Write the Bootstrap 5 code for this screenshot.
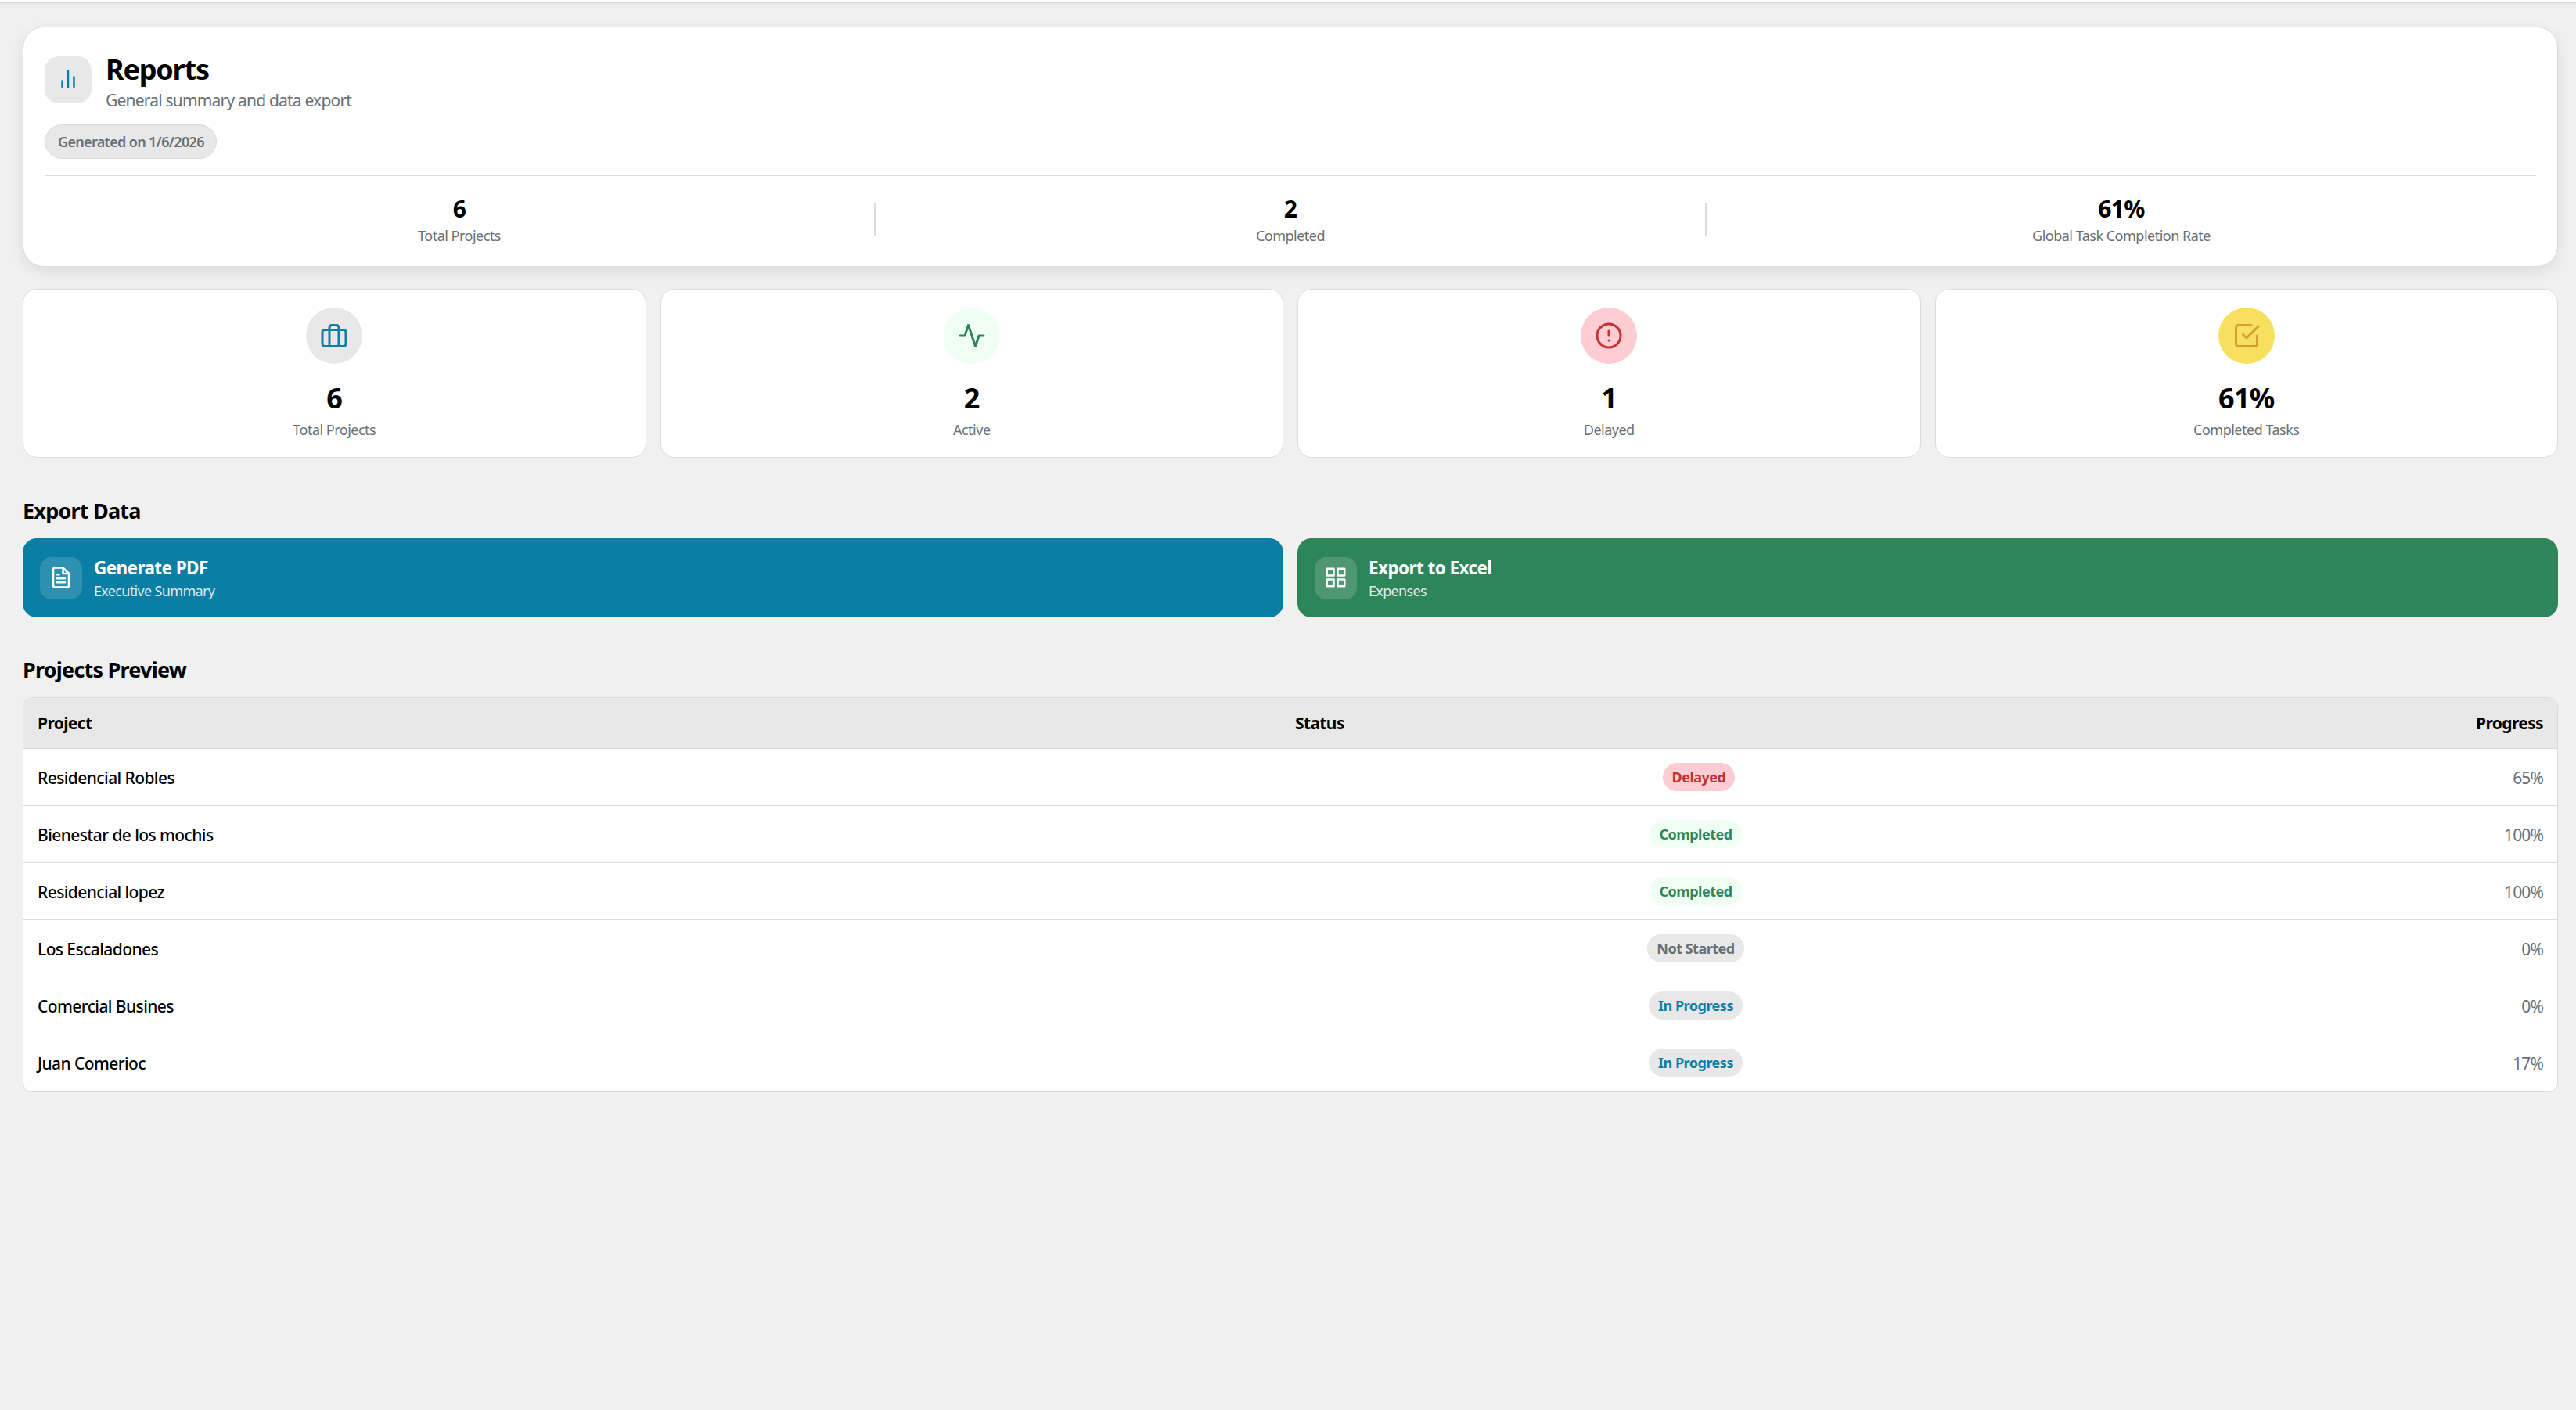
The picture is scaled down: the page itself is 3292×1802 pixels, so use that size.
<!DOCTYPE html>
<html lang="en">
<head>
  <meta charset="UTF-8" />
  <meta name="viewport" content="width=device-width, initial-scale=1" />
  <title>Reports</title>
  <link href="https://cdn.jsdelivr.net/npm/bootstrap@5.3.3/dist/css/bootstrap.min.css" rel="stylesheet" />
  <style>
    :root {
      --line: #dcdcdc;
      --soft: #e8e8e8;
      --muted: #687076;
      --blue: #0a7ea4;
      --green: #2f855a;
      --red: #c53030;
      --gold: #d69e2e;
    }

    body {
      background-color: #f0f0f0;
      font-family: 'Noto Sans', 'Open Sans', sans-serif;
      font-size: 21px;
      color: #000;
      min-height: 100vh;
    }

    svg {
      display: block;
      fill: none;
      stroke: currentColor;
      stroke-width: 2;
      stroke-linecap: round;
      stroke-linejoin: round;
    }

    .topbar {
      height: 4px;
      background-color: #fff;
      border-bottom: 1px solid #d6d6d6;
      box-shadow: 0 2px 6px rgba(0, 0, 0, 0.07);
    }

    main {
      padding: 30px 23px 0 29px;
    }

    h1 {
      font-size: 36px;
      line-height: 46px;
      letter-spacing: -0.033em;
      padding-top: 2px;
    }

    h2 {
      font-size: 27px;
      line-height: 34px;
      letter-spacing: -0.029em;
      margin: 0 0 18px;
    }

    .text-soft {
      color: var(--muted);
    }

    /* Header card */
    .report-head {
      background-color: #fff;
      border: 1px solid var(--line);
      border-radius: 27px;
      padding: 29px 27px 27px;
      box-shadow: 0 6px 18px rgba(0, 0, 0, 0.08);
    }

    .head-icon {
      width: 60px;
      height: 60px;
      border-radius: 18px;
      background-color: var(--soft);
      color: var(--blue);
      margin-right: 18px;
      padding-top: 14px;
    }

    .subtitle {
      line-height: 24px;
      letter-spacing: -0.038em;
      margin-top: 4px;
    }

    .date-pill {
      display: inline-block;
      margin-top: 19px;
      padding: 0 15px 0 16px;
      height: 44px;
      line-height: 42px;
      font-size: 18px;
      font-weight: 600;
      letter-spacing: -0.037em;
      border: 1px solid var(--line);
      border-radius: 22px;
      background-color: var(--soft);
    }

    .head-stats {
      margin-top: 21px;
      padding-top: 23px;
      border-top: 1px solid var(--line);
    }

    .head-stats .vr {
      width: 2px;
      height: 42px;
      margin-bottom: 2px;
      background-color: var(--line);
      opacity: 1;
    }

    .head-value {
      font-size: 30px;
      line-height: 36px;
      letter-spacing: -0.02em;
      padding-top: 1px;
      margin-bottom: 4px;
    }

    .caption-text {
      font-size: 18px;
      line-height: 24px;
      letter-spacing: -0.028em;
    }

    /* Stat cards */
    .stat-grid {
      display: grid;
      grid-template-columns: repeat(4, 1fr);
      gap: 18px;
      margin-top: 28px;
    }

    .stat-box {
      background-color: #fff;
      border: 1px solid var(--line);
      border-radius: 18px;
      padding: 23px 0;
    }

    .stat-icon {
      width: 72px;
      height: 72px;
    }

    .stat-icon svg {
      margin-top: -1px;
    }

    .stat-value {
      font-size: 36px;
      line-height: 44px;
      letter-spacing: -0.02em;
      margin: 22px 0 6px;
    }

    .tone-blue { background-color: var(--soft); color: var(--blue); }
    .tone-green { background-color: #f0fff4; color: var(--green); }
    .tone-red { background-color: #fecdd3; color: var(--red); }
    .tone-gold { background-color: #f6e05e; color: var(--gold); }
    .tone-gray { background-color: var(--soft); color: var(--muted); }

    /* Export buttons */
    .export-title {
      margin-top: 51px;
    }

    .export-grid {
      display: grid;
      grid-template-columns: 1fr 1fr;
      gap: 18px;
    }

    .export-btn {
      height: 101px;
      border: 0;
      border-radius: 18px;
      padding: 0 22px;
      color: #fff;
      text-align: left;
    }

    .export-icon {
      width: 54px;
      height: 54px;
      border-radius: 15px;
      margin-right: 15px;
      background-color: rgba(255, 255, 255, 0.15);
    }

    .export-icon svg {
      margin-top: -2px;
    }

    .export-name {
      font-size: 22.5px;
      line-height: 30px;
      letter-spacing: -0.026em;
      padding-top: 1px;
      margin-bottom: 2px;
    }

    .export-note {
      font-size: 18px;
      line-height: 24px;
      letter-spacing: -0.037em;
      opacity: 0.85;
    }

    .bg-pdf { background-color: var(--blue); }
    .bg-excel { background-color: var(--green); }

    /* Projects table */
    .preview-title {
      margin-top: 50px;
    }

    .preview {
      background-color: #fff;
      border: 1px solid var(--line);
      border-radius: 12px;
      overflow: hidden;
    }

    .preview-row {
      display: grid;
      grid-template-columns: 1607px 1024px 1fr;
      align-items: center;
      height: 73px;
      padding: 0 18px;
      border-bottom: 1px solid var(--line);
    }

    .preview-head {
      height: 65px;
      padding-top: 2px;
      background-color: var(--soft);
      font-weight: 700;
      letter-spacing: -0.03em;
    }

    .project-name {
      font-weight: 500;
      letter-spacing: -0.028em;
      padding-top: 3px;
    }

    .percent {
      letter-spacing: -0.042em;
      padding-top: 3px;
    }

    .status-pill {
      display: inline-block;
      height: 36px;
      line-height: 36px;
      padding: 0 12px;
      border-radius: 18px;
      font-size: 18px;
      font-weight: 700;
      letter-spacing: -0.028em;
    }

    .status-late {
      margin-left: 8px;
    }
  </style>
</head>
<body>

<div class="topbar"></div>

<main>
  <!-- Header -->
  <section class="report-head">
    <div class="d-flex align-items-center">
      <div class="head-icon d-flex justify-content-center">
        <svg width="30" height="30" viewBox="0 0 24 24"><path d="M18 20V10M12 20V4M6 20v-6" /></svg>
      </div>
      <div>
        <h1 class="fw-bold m-0">Reports</h1>
        <div class="subtitle text-soft">General summary and data export</div>
      </div>
    </div>
    <div class="d-flex"><span class="date-pill text-soft">Generated on 1/6/2026</span></div>

    <div class="head-stats d-flex align-items-center text-center">
      <div class="flex-fill w-100">
        <div class="head-value fw-bold">6</div>
        <div class="caption-text text-soft">Total Projects</div>
      </div>
      <div class="vr flex-shrink-0 align-self-center"></div>
      <div class="flex-fill w-100">
        <div class="head-value fw-bold">2</div>
        <div class="caption-text text-soft">Completed</div>
      </div>
      <div class="vr flex-shrink-0 align-self-center"></div>
      <div class="flex-fill w-100">
        <div class="head-value fw-bold">61%</div>
        <div class="caption-text text-soft">Global Task Completion Rate</div>
      </div>
    </div>
  </section>

  <!-- Stats -->
  <section class="stat-grid text-center">
    <div class="stat-box">
      <div class="stat-icon tone-blue rounded-circle mx-auto d-flex align-items-center justify-content-center">
        <svg width="36" height="36" viewBox="0 0 24 24"><rect x="2" y="7" width="20" height="14" rx="2" /><path d="M16 21V5a2 2 0 0 0-2-2h-4a2 2 0 0 0-2 2v16" /></svg>
      </div>
      <div class="stat-value fw-bold">6</div>
      <div class="caption-text text-soft">Total Projects</div>
    </div>
    <div class="stat-box">
      <div class="stat-icon tone-green rounded-circle mx-auto d-flex align-items-center justify-content-center">
        <svg width="36" height="36" viewBox="0 0 24 24"><polyline points="22 12 18 12 15 21 9 3 6 12 2 12" /></svg>
      </div>
      <div class="stat-value fw-bold">2</div>
      <div class="caption-text text-soft">Active</div>
    </div>
    <div class="stat-box">
      <div class="stat-icon tone-red rounded-circle mx-auto d-flex align-items-center justify-content-center">
        <svg width="36" height="36" viewBox="0 0 24 24"><circle cx="12" cy="12" r="10" /><path d="M12 8v4M12 16h.01" /></svg>
      </div>
      <div class="stat-value fw-bold">1</div>
      <div class="caption-text text-soft">Delayed</div>
    </div>
    <div class="stat-box">
      <div class="stat-icon tone-gold rounded-circle mx-auto d-flex align-items-center justify-content-center">
        <svg width="36" height="36" viewBox="0 0 24 24"><polyline points="9 11 12 14 22 4" /><path d="M21 12v7a2 2 0 0 1-2 2H5a2 2 0 0 1-2-2V5a2 2 0 0 1 2-2h11" /></svg>
      </div>
      <div class="stat-value fw-bold">61%</div>
      <div class="caption-text text-soft">Completed Tasks</div>
    </div>
  </section>

  <!-- Export -->
  <h2 class="export-title fw-bold">Export Data</h2>
  <section class="export-grid">
    <button type="button" class="export-btn bg-pdf d-flex align-items-center">
      <span class="export-icon d-flex align-items-center justify-content-center">
        <svg width="30" height="30" viewBox="0 0 24 24"><path d="M14 2H6a2 2 0 0 0-2 2v16a2 2 0 0 0 2 2h12a2 2 0 0 0 2-2V8z" /><path d="M14 2v6h6M16 13H8M16 17H8M10 9H8" /></svg>
      </span>
      <span>
        <span class="export-name fw-bold d-block">Generate PDF</span>
        <span class="export-note d-block">Executive Summary</span>
      </span>
    </button>
    <button type="button" class="export-btn bg-excel d-flex align-items-center">
      <span class="export-icon d-flex align-items-center justify-content-center">
        <svg width="30" height="30" viewBox="0 0 24 24"><path d="M3 3h7v7H3zM14 3h7v7h-7zM14 14h7v7h-7zM3 14h7v7H3z" /></svg>
      </span>
      <span>
        <span class="export-name fw-bold d-block">Export to Excel</span>
        <span class="export-note d-block">Expenses</span>
      </span>
    </button>
  </section>

  <!-- Projects -->
  <h2 class="preview-title fw-bold">Projects Preview</h2>
  <section class="preview">
    <div class="preview-row preview-head">
      <div>Project</div>
      <div>Status</div>
      <div class="text-end">Progress</div>
    </div>
    <div id="projectRows"></div>
  </section>
</main>

<script src="https://cdn.jsdelivr.net/npm/bootstrap@5.3.3/dist/js/bootstrap.bundle.min.js"></script>
<script>
  const projects = [
    { name: "Residencial Robles", status: "Delayed", progress: 65 },
    { name: "Bienestar de los mochis", status: "Completed", progress: 100 },
    { name: "Residencial lopez", status: "Completed", progress: 100 },
    { name: "Los Escaladones", status: "Not Started", progress: 0 },
    { name: "Comercial Busines", status: "In Progress", progress: 0 },
    { name: "Juan Comerioc", status: "In Progress", progress: 17 }
  ];

  const statusClass = {
    "Delayed": "tone-red status-late",
    "Completed": "tone-green",
    "Not Started": "tone-gray",
    "In Progress": "tone-blue"
  };

  document.getElementById("projectRows").innerHTML = projects.map(p => `
    <div class="preview-row">
      <div class="project-name">${p.name}</div>
      <div class="text-center"><span class="status-pill ${statusClass[p.status]}">${p.status}</span></div>
      <div class="percent text-soft text-end">${p.progress}%</div>
    </div>
  `).join("");
</script>

</body>
</html>
